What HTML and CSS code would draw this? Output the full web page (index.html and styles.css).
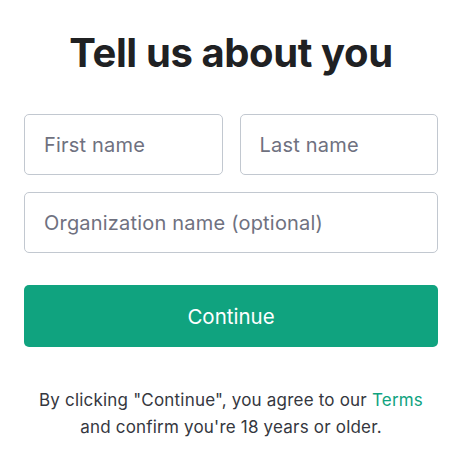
FILE: index.html
```html
<!DOCTYPE html>
<html lang="en">
<head>
<meta charset="utf-8">
<title>Tell us about you</title>
<link rel="stylesheet" href="styles.css">
</head>
<body>
<main class="page">
  <h1 class="title">Tell us about you</h1>
  <form class="form">
    <div class="row">
      <input class="field" type="text" placeholder="First name">
      <input class="field" type="text" placeholder="Last name">
    </div>
    <input class="field" type="text" placeholder="Organization name (optional)">
    <button class="btn" type="button">Continue</button>
  </form>
  <p class="legal">By clicking "Continue", you agree to our <a class="link" href="#">Terms</a><br>and confirm you're 18 years or older.</p>
</main>
</body>
</html>
```

FILE: styles.css
```css
* { box-sizing: border-box; }
html, body { margin: 0; padding: 0; background: #ffffff; }
body { font-family: Inter, "Noto Sans", sans-serif; color: #2d333a; }
.page {
  padding: 30px 31px 0 24px;
  display: flex;
  flex-direction: column;
}
.title {
  margin: 0;
  text-align: center;
  font-size: 40px;
  line-height: 46px;
  font-weight: 700;
  color: #202123;
  letter-spacing: -0.4px;
}
.form {
  margin-top: 38px;
  display: flex;
  flex-direction: column;
  gap: 17px;
}
.row {
  display: grid;
  grid-template-columns: 1fr 1fr;
  gap: 17px;
}
.field {
  width: 100%;
  height: 61px;
  border: 1px solid #c2c8d0;
  border-radius: 5px;
  padding: 0 19px;
  font-family: inherit;
  font-size: 20px;
  letter-spacing: 0.2px;
  color: #2d333a;
  background: #fff;
  outline: none;
}
.field::placeholder { color: #6f7180; opacity: 1; }
.btn {
  margin-top: 15px;
  height: 62px;
  width: 100%;
  border: 0;
  border-radius: 5px;
  background: #10a37f;
  color: #ffffff;
  font-family: inherit;
  font-size: 20.5px;
  font-weight: 400;
}
.legal {
  margin: 40px 0 0 0;
  text-align: center;
  font-size: 17px;
  line-height: 27px;
  letter-spacing: 0.2px;
  color: #353740;
}
.link { color: #10a37f; text-decoration: none; }
```
